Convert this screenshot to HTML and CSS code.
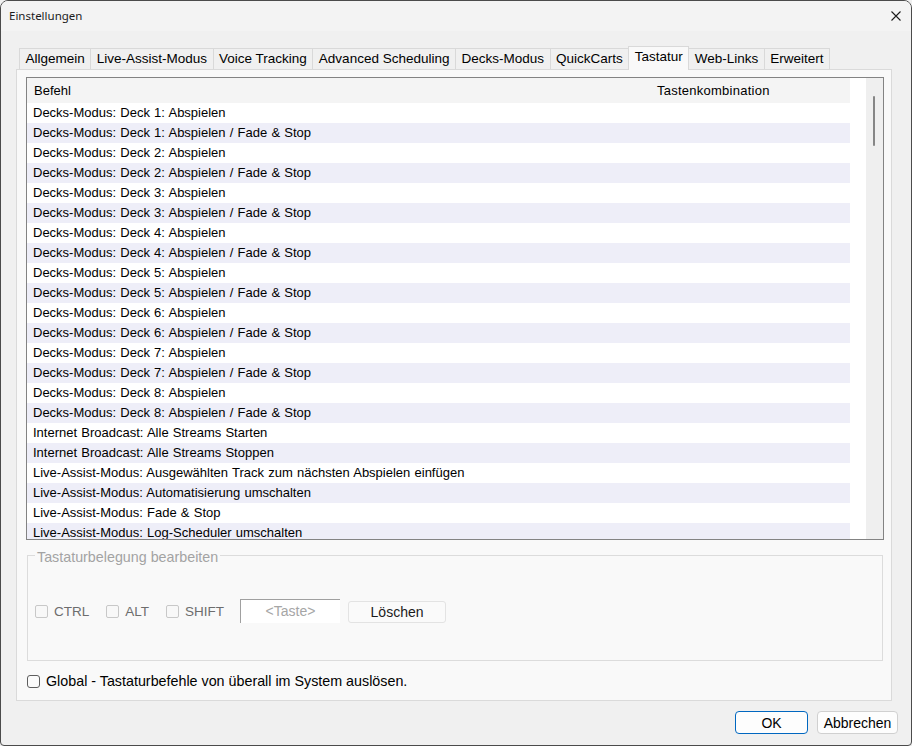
FILE: index.html
```html
<!DOCTYPE html>
<html lang="de">
<head>
    <meta charset="UTF-8">
    <meta name="viewport" content="width=device-width, initial-scale=1.0">
    <title>Einstellungen</title>
    <link rel="stylesheet" href="styles.css">
</head>
<body>
    <div class="window">
        <div class="titlebar">
            <span class="title">Einstellungen</span>
            <svg class="close" width="10" height="10" viewBox="0 0 10 10">
                <path d="M0.5 0.5 L9.5 9.5 M9.5 0.5 L0.5 9.5" stroke="#1b1b1b" stroke-width="1.1" fill="none"/>
            </svg>
        </div>

        <div class="client">
            <div class="tabs">
                <div class="tab">Allgemein</div>
                <div class="tab">Live-Assist-Modus</div>
                <div class="tab">Voice Tracking</div>
                <div class="tab">Advanced Scheduling</div>
                <div class="tab">Decks-Modus</div>
                <div class="tab">QuickCarts</div>
                <div class="tab active">Tastatur</div>
                <div class="tab">Web-Links</div>
                <div class="tab">Erweitert</div>
            </div>

            <div class="panel">
                <div class="listbox">
                    <div class="grid">
                        <div class="grid-head">
                            <span class="col-cmd">Befehl</span>
                            <span class="col-keys">Tastenkombination</span>
                        </div>
                        <div class="row">Decks-Modus: Deck 1: Abspielen</div>
                        <div class="row">Decks-Modus: Deck 1: Abspielen / Fade &amp; Stop</div>
                        <div class="row">Decks-Modus: Deck 2: Abspielen</div>
                        <div class="row">Decks-Modus: Deck 2: Abspielen / Fade &amp; Stop</div>
                        <div class="row">Decks-Modus: Deck 3: Abspielen</div>
                        <div class="row">Decks-Modus: Deck 3: Abspielen / Fade &amp; Stop</div>
                        <div class="row">Decks-Modus: Deck 4: Abspielen</div>
                        <div class="row">Decks-Modus: Deck 4: Abspielen / Fade &amp; Stop</div>
                        <div class="row">Decks-Modus: Deck 5: Abspielen</div>
                        <div class="row">Decks-Modus: Deck 5: Abspielen / Fade &amp; Stop</div>
                        <div class="row">Decks-Modus: Deck 6: Abspielen</div>
                        <div class="row">Decks-Modus: Deck 6: Abspielen / Fade &amp; Stop</div>
                        <div class="row">Decks-Modus: Deck 7: Abspielen</div>
                        <div class="row">Decks-Modus: Deck 7: Abspielen / Fade &amp; Stop</div>
                        <div class="row">Decks-Modus: Deck 8: Abspielen</div>
                        <div class="row">Decks-Modus: Deck 8: Abspielen / Fade &amp; Stop</div>
                        <div class="row">Internet Broadcast: Alle Streams Starten</div>
                        <div class="row">Internet Broadcast: Alle Streams Stoppen</div>
                        <div class="row">Live-Assist-Modus: Ausgewählten Track zum nächsten Abspielen einfügen</div>
                        <div class="row">Live-Assist-Modus: Automatisierung umschalten</div>
                        <div class="row">Live-Assist-Modus: Fade &amp; Stop</div>
                        <div class="row">Live-Assist-Modus: Log-Scheduler umschalten</div>
                        <div class="row">Live-Assist-Modus: Nächsten Track abspielen</div>
                    </div>
                    <div class="scrollbar"><div class="thumb"></div></div>
                </div>

                <fieldset class="group">
                    <legend>Tastaturbelegung bearbeiten</legend>
                    <div class="key-row">
                        <label class="mod"><input type="checkbox" disabled> CTRL</label>
                        <label class="mod"><input type="checkbox" disabled> ALT</label>
                        <label class="mod"><input type="checkbox" disabled> SHIFT</label>
                        <div class="key-box">&lt;Taste&gt;</div>
                        <button class="clear-btn" disabled>Löschen</button>
                    </div>
                </fieldset>

                <label class="global"><input type="checkbox"> Global - Tastaturbefehle von überall im System auslösen.</label>
            </div>

            <div class="buttons">
                <button class="btn btn-default">OK</button>
                <button class="btn btn-cancel">Abbrechen</button>
            </div>
        </div>
    </div>
</body>
</html>
```

FILE: styles.css
```css
body {
    margin: 0;
    font-family: "Liberation Sans", Arial, sans-serif;
    background-color: #f0f0f0;
}

.window {
    width: 912px;
    height: 746px;
    box-sizing: border-box;
    border: 1px solid #4b4b4b;
    border-radius: 8px 8px 4px 4px;
    background-color: #f0f0f0;
    overflow: hidden;
}

.titlebar {
    height: 30px;
    display: flex;
    align-items: center;
    justify-content: space-between;
    padding: 0 10px 0 8px;
    background-color: #f3f3f3;
}

.title {
    font-family: "Noto Sans", "Open Sans", sans-serif;
    font-size: 11.5px;
    color: #1b1b1b;
    margin-top: -2px;
}

.close {
    margin-top: -1px;
}

.client {
    padding: 15px 0 0 15px;
}

/* tab strip */
.tabs {
    display: flex;
    align-items: flex-end;
    height: 24px;
    margin-left: 3px;
    margin-bottom: -1px;
    position: relative;
    z-index: 1;
}

.tab {
    height: 21px;
    box-sizing: border-box;
    margin-bottom: 1px;
    margin-right: -1px;
    padding: 0 5.5px;
    border: 1px solid #d9d9d9;
    border-bottom: none;
    background-color: #f0f0f0;
    font-size: 13.5px;
    line-height: 20px;
    color: #000;
    white-space: nowrap;
}

.tab.active {
    height: 24px;
    margin-bottom: 0;
    background-color: #f9f9f9;
}

.panel {
    width: 876px;
    height: 632px;
    box-sizing: border-box;
    border: 1px solid #dadada;
    background-color: #f9f9f9;
    padding: 7px 0 0 9px;
}

/* command list */
.listbox {
    width: 858px;
    height: 463px;
    box-sizing: border-box;
    border: 1px solid #838383;
    background-color: #fff;
    display: flex;
}

.grid {
    width: 839px;
    overflow: hidden;
    font-size: 13px;
    color: #000;
}

.grid-head {
    width: 823px;
    height: 25px;
    display: flex;
    align-items: center;
    background-color: #f4f4f4;
    padding-left: 7px;
    box-sizing: border-box;
}

.col-cmd {
    width: 623px;
}

.col-keys {
    letter-spacing: 0.25px;
}

.row {
    width: 823px;
    height: 20px;
    line-height: 20px;
    padding-left: 6px;
    box-sizing: border-box;
    white-space: nowrap;
    word-spacing: 0.6px;
}

.row:nth-child(odd) {
    background-color: #eeeef8;
}

.scrollbar {
    width: 17px;
    background-color: #efefef;
}

.thumb {
    width: 2px;
    height: 50px;
    margin: 18px 0 0 7px;
    border-radius: 1px;
    background-color: #868686;
}

/* edit group */
.group {
    width: 856px;
    height: 114px;
    box-sizing: border-box;
    margin: 7px 0 0 1px;
    padding: 0 7px;
    border: 1px solid #dcdcdc;
}

.group legend {
    padding: 3px 2px 0;
    font-size: 14.3px;
    line-height: 14px;
    color: #a3a3a3;
}

.key-row {
    display: flex;
    align-items: center;
    height: 24px;
    margin-top: 35px;
}

.mod {
    display: flex;
    align-items: center;
    gap: 6px;
    margin-right: 17px;
    font-size: 13.5px;
    color: #6d6d6d;
}

.mod:nth-child(3) {
    margin-right: 16px;
}

.mod input,
.global input {
    appearance: none;
    margin: 0;
    width: 13px;
    height: 13px;
    box-sizing: border-box;
}

.mod input {
    border: 1px solid #c8c8c8;
    border-radius: 2px;
    background-color: #f8f8f8;
}

.key-box {
    width: 100px;
    height: 24px;
    box-sizing: border-box;
    border-top: 1px solid #a0a0a0;
    border-left: 1px solid #a0a0a0;
    background-color: #fff;
    text-align: center;
    line-height: 22px;
    font-size: 14px;
    color: #a6a6a6;
}

.clear-btn {
    width: 98px;
    height: 22px;
    margin: 2px 0 0 8px;
    border: 1px solid #e3e3e3;
    border-radius: 3px;
    background-color: #fafafa;
    font-family: "Liberation Sans", Arial, sans-serif;
    font-size: 14px;
    color: #1a1a1a;
    padding: 0;
}

.global {
    display: flex;
    align-items: center;
    gap: 6px;
    height: 16px;
    margin: 12px 0 0 1px;
    font-size: 14.3px;
    color: #000;
}

.global input {
    border: 1px solid #5e5e5e;
    border-radius: 3px;
    background-color: #fbfbfb;
}

/* dialog buttons */
.buttons {
    display: flex;
    justify-content: flex-end;
    gap: 9px;
    margin: 10px 13px 0 0;
}

.btn {
    height: 23px;
    box-sizing: border-box;
    border-radius: 4px;
    background-color: #fdfdfd;
    font-family: "Liberation Sans", Arial, sans-serif;
    font-size: 14px;
    color: #000;
    padding: 0;
}

.btn-default {
    width: 73px;
    border: 1px solid #0067c0;
}

.btn-cancel {
    width: 81px;
    border: 1px solid #d0d0d0;
}
```
